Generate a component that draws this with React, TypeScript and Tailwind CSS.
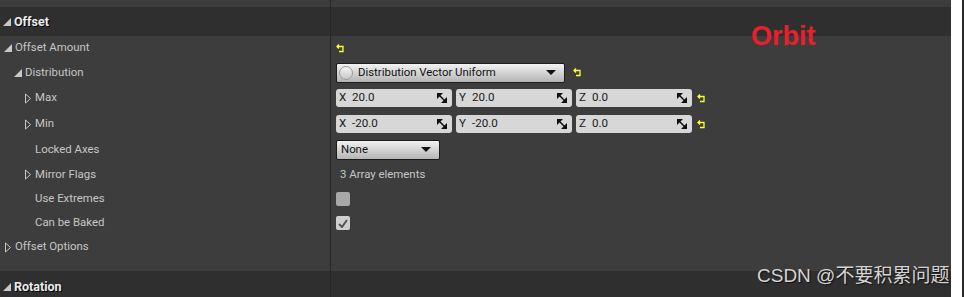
import React from "react";

const font = "font-['Roboto','Liberation_Sans',sans-serif]";

function ResetIcon() {
  return (
    <svg width="9" height="9" viewBox="0 0 9 9" className="shrink-0">
      <path d="M3 0.5 L1 2.5 L3 4.5 M1 2.5 H7 V7.5 H3" fill="none" stroke="#ffff33" strokeWidth="1.3" />
    </svg>
  );
}

function Filled() {
  return (
    <svg width="8" height="8" viewBox="0 0 8 8" className="shrink-0">
      <polygon points="8,0 8,8 0,8" fill="#c8c8c8" />
    </svg>
  );
}

function Hollow() {
  return (
    <svg width="8" height="11" viewBox="0 0 8 11" className="shrink-0">
      <polygon points="1.5,1 6.5,5.5 1.5,10" fill="none" stroke="#c8c8c8" strokeWidth="1" />
    </svg>
  );
}

function ExpandIcon() {
  return (
    <svg width="10" height="10" viewBox="0 0 10 10" className="shrink-0">
      <polygon points="0,0 6,0 0,6" fill="#111" />
      <polygon points="10,4 10,10 4,10" fill="#111" />
      <line x1="1" y1="1" x2="9" y2="9" stroke="#111" strokeWidth="1.6" />
    </svg>
  );
}

function Combo({ w, label, circle }: { w: string; label: string; circle?: boolean }) {
  return (
    <div
      className={`${w} h-[20px] flex items-center gap-[5px] px-[2px] rounded-[2px] border border-[#1c1c1c] bg-gradient-to-b from-[#f2f2f2] to-[#b5b5b5] text-[11.4px] text-[#111]`}
    >
      {circle && (
        <span className="w-[14px] h-[14px] rounded-full border border-[#9a9a9a] bg-gradient-to-b from-[#f4f4f4] to-[#c8c8c8]" />
      )}
      <span className={circle ? "" : "pl-[2px]"}>{label}</span>
      <span className="ml-auto mr-[6px] w-0 h-0 border-l-[5px] border-r-[5px] border-t-[5px] border-l-transparent border-r-transparent border-t-[#111]" />
    </div>
  );
}

function VecField({ axis, value }: { axis: string; value: string }) {
  return (
    <div className="w-[116px] h-[18px] flex items-center pl-[3px] pr-[5px] rounded-[3px] bg-[#d7d7d7] text-[11.6px] text-[#1a1a1a]">
      <span className="w-[13px]">{axis}</span>
      <span>{value}</span>
      <span className="ml-auto">
        <ExpandIcon />
      </span>
    </div>
  );
}

type RowProps = {
  h: string;
  indent: string;
  icon?: "filled" | "hollow";
  label: string;
  children?: React.ReactNode;
};

function Row({ h, indent, icon, label, children }: RowProps) {
  return (
    <div className={`flex ${h}`}>
      <div className={`w-[331px] shrink-0 flex items-center ${indent} border-r border-[#262626] text-[11.4px] text-[#c6c6c6]`}>
        <span className="w-[11px] flex items-center">
          {icon === "filled" && <Filled />}
          {icon === "hollow" && <Hollow />}
        </span>
        <span>{label}</span>
      </div>
      <div className="flex-1 flex items-center pl-[5px]">{children}</div>
    </div>
  );
}

export default function App() {
  return (
    <div className={`w-[964px] h-[297px] flex overflow-hidden ${font}`}>
      <div className="relative w-[951px] h-full flex flex-col bg-[#3d3d3d]">
        <div className="h-[7px] flex">
          <div className="w-[331px] border-r border-[#262626]" />
        </div>
        <div className="h-[29px] flex bg-[#2f2f2f]">
          <div className="w-[331px] flex items-center gap-[3px] pl-[3px] pt-[1px] border-r border-[#262626]">
            <Filled />
            <span className="text-[12.5px] font-bold text-[#ececec] [text-shadow:1px_1px_0_#000]">Offset</span>
          </div>
        </div>

        <Row h="h-[24px]" indent="pl-[4px]" icon="filled" label="Offset Amount">
          <ResetIcon />
        </Row>
        <Row h="h-[25px]" indent="pl-[14px]" icon="filled" label="Distribution">
          <Combo w="w-[229px]" label="Distribution Vector Uniform" circle />
          <span className="ml-[8px]">
            <ResetIcon />
          </span>
        </Row>
        <Row h="h-[26px]" indent="pl-[24px]" icon="hollow" label="Max">
          <div className="flex gap-[4px]">
            <VecField axis="X" value="20.0" />
            <VecField axis="Y" value="20.0" />
            <VecField axis="Z" value="0.0" />
          </div>
          <span className="ml-[5px]">
            <ResetIcon />
          </span>
        </Row>
        <Row h="h-[26px]" indent="pl-[24px]" icon="hollow" label="Min">
          <div className="flex gap-[4px]">
            <VecField axis="X" value="-20.0" />
            <VecField axis="Y" value="-20.0" />
            <VecField axis="Z" value="0.0" />
          </div>
          <span className="ml-[5px]">
            <ResetIcon />
          </span>
        </Row>
        <Row h="h-[25px]" indent="pl-[24px]" label="Locked Axes">
          <Combo w="w-[104px]" label="None" />
        </Row>
        <Row h="h-[25px]" indent="pl-[24px]" icon="hollow" label="Mirror Flags">
          <span className="pl-[4px] text-[11.4px] text-[#c6c6c6]">3 Array elements</span>
        </Row>
        <Row h="h-[24px]" indent="pl-[24px]" label="Use Extremes">
          <span className="w-[14px] h-[14px] rounded-[2px] bg-[#a8a8a8]" />
        </Row>
        <Row h="h-[24px]" indent="pl-[24px]" label="Can be Baked">
          <span className="w-[14px] h-[14px] rounded-[2px] bg-[#cfcfcf] flex items-center justify-center">
            <svg width="10" height="9" viewBox="0 0 10 9">
              <path d="M1 5 L4 8 L9 1" fill="none" stroke="#555" strokeWidth="2" />
            </svg>
          </span>
        </Row>
        <Row h="h-[24px]" indent="pl-[4px]" icon="hollow" label="Offset Options" />
        <div className="h-[12px] flex">
          <div className="w-[331px] border-r border-[#262626]" />
        </div>
        <div className="flex-1 flex bg-[#2f2f2f]">
          <div className="w-[331px] flex items-start gap-[3px] pl-[3px] pt-[7px] border-r border-[#262626]">
            <span className="pt-[5px]">
              <Filled />
            </span>
            <span className="text-[12.5px] font-bold text-[#ececec] [text-shadow:1px_1px_0_#000]">Rotation</span>
          </div>
        </div>

        <span className="absolute left-[751px] top-[23px] font-['Liberation_Sans',sans-serif] text-[27px] font-bold leading-none text-[#e8202a]">
          Orbit
        </span>
        <span className="absolute left-[757px] top-[266px] font-['Liberation_Sans','Noto_Sans_CJK_SC',sans-serif] text-[19px] leading-none text-[#d4d4d4] [text-shadow:1px_1px_1px_#111]">
          CSDN @不要积累问题
        </span>
      </div>
      <div className="w-[11px] h-full bg-white" />
      <div className="w-[2px] h-full bg-[#2b2b2b]" />
    </div>
  );
}
